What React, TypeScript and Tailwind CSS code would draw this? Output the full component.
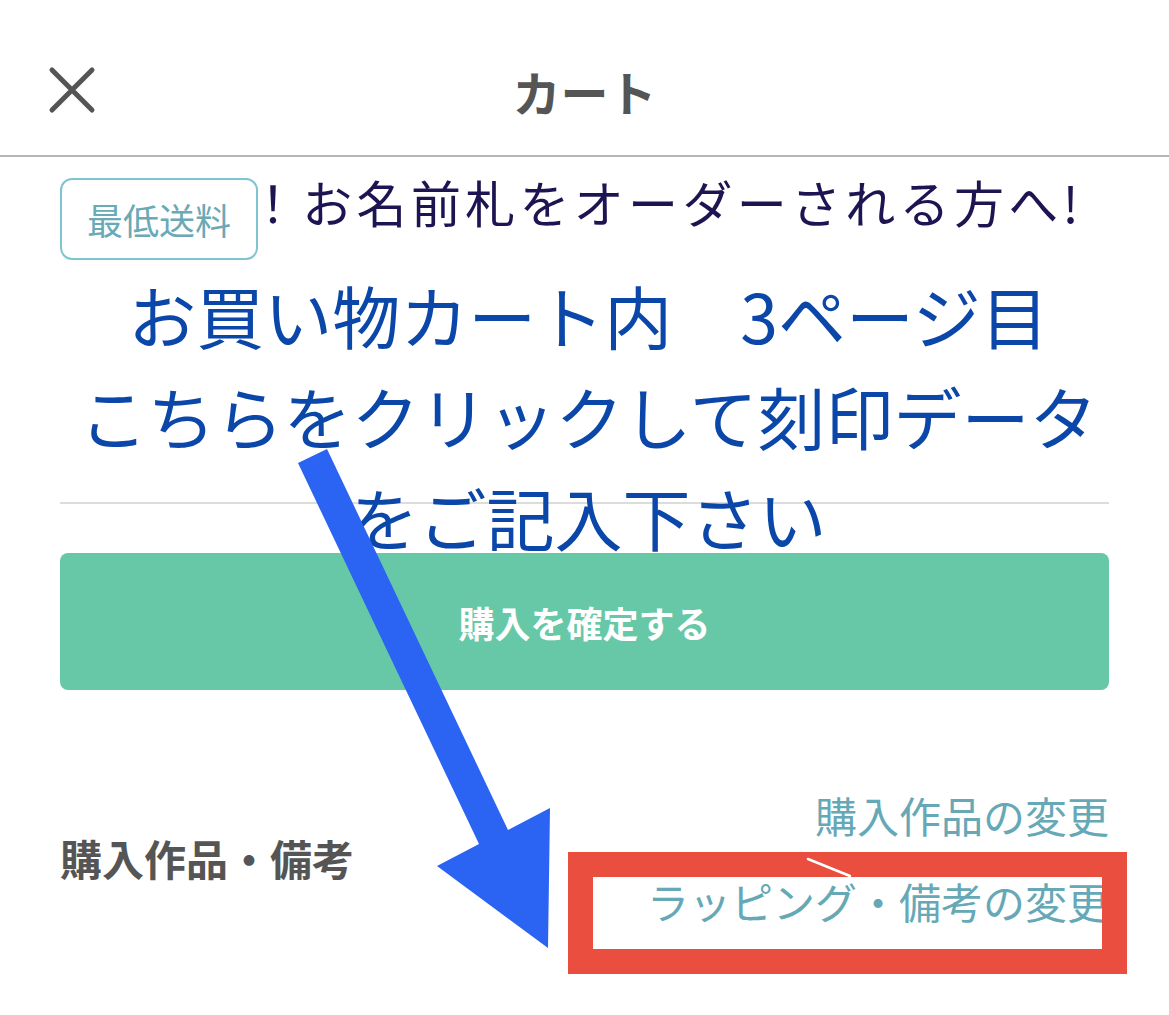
import React from "react";

const CloseIcon: React.FC = () => (
  <svg width="48" height="48" viewBox="0 0 48 48" fill="none">
    <path d="M4 4L44 44M44 4L4 44" stroke="#555555" strokeWidth="5" strokeLinecap="round" />
  </svg>
);

// blue guide arrow + red highlight frame drawn on top of the cart page
const Annotations: React.FC = () => (
  <>
    <svg className="absolute inset-0 pointer-events-none" width="1169" height="1015" viewBox="0 0 1169 1015">
      <polygon
        points="298,463 327,449 508,830 550,808 548,948 437,866 479,844"
        fill="#2b63f3"
      />
    </svg>
    <div className="absolute left-[568px] top-[852px] w-[559px] h-[122px] border-[25px] border-[#e94e3e] pointer-events-none" />
    <svg className="absolute inset-0 pointer-events-none" width="1169" height="1015" viewBox="0 0 1169 1015">
      <line x1="808" y1="859" x2="850" y2="876" stroke="#ffffff" strokeWidth="2.5" strokeLinecap="round" />
    </svg>
  </>
);

export default function App() {
  return (
    <div className="relative w-[1169px] h-[1015px] bg-white overflow-hidden font-['Noto_Sans_CJK_JP',sans-serif]">
      {/* header */}
      <header className="grid grid-cols-[1fr_auto_1fr] items-start h-[157px] pt-[66px] border-b-[2px] border-[#b5b5b5]">
        <div className="pl-[48px]">
          <CloseIcon />
        </div>
        <h1 className="text-[48px] leading-[50px] font-bold text-[#555555]">カート</h1>
        <div />
      </header>

      <div className="px-[60px]">
        {/* notice row */}
        <div className="flex items-start pt-[21px]">
          <div className="w-[198px] h-[82px] shrink-0 rounded-[12px] border-[2px] border-[#7fc4d1] flex items-center justify-center text-[36px] text-[#6aa9b6]">
            最低送料
          </div>
          <p className="ml-[-10px] mt-[-2px] text-[50px] leading-[50px] tracking-[4.3px] text-[#1d1552] whitespace-nowrap">
            ！お名前札をオーダーされる方へ!
          </p>
        </div>

        {/* guide text */}
        <div className="relative h-[289px] mt-[4px]">
          <div className="absolute left-0 right-0 top-[238px] h-[2px] bg-[#dcdcdc]" />
          <div className="relative text-center text-[68px] leading-[101px] text-[#0b47a9] whitespace-nowrap pl-[8px]">
            <p>お買い物カート内　3ページ目</p>
            <p>こちらをクリックして刻印データ</p>
            <p>をご記入下さい</p>
          </div>
        </div>

        {/* confirm button */}
        <button className="w-full h-[137px] rounded-[8px] bg-[#67c8a7] text-white text-[36px] font-bold">
          購入を確定する
        </button>

        {/* items & notes */}
        <div className="flex items-center justify-between mt-[82px]">
          <h2 className="text-[42px] font-bold text-[#555555] leading-none">購入作品・備考</h2>
          <div className="text-right text-[42px] leading-[86px] text-[#66a8b6]">
            <p>購入作品の変更</p>
            <p>ラッピング・備考の変更</p>
          </div>
        </div>
      </div>

      <Annotations />
    </div>
  );
}
